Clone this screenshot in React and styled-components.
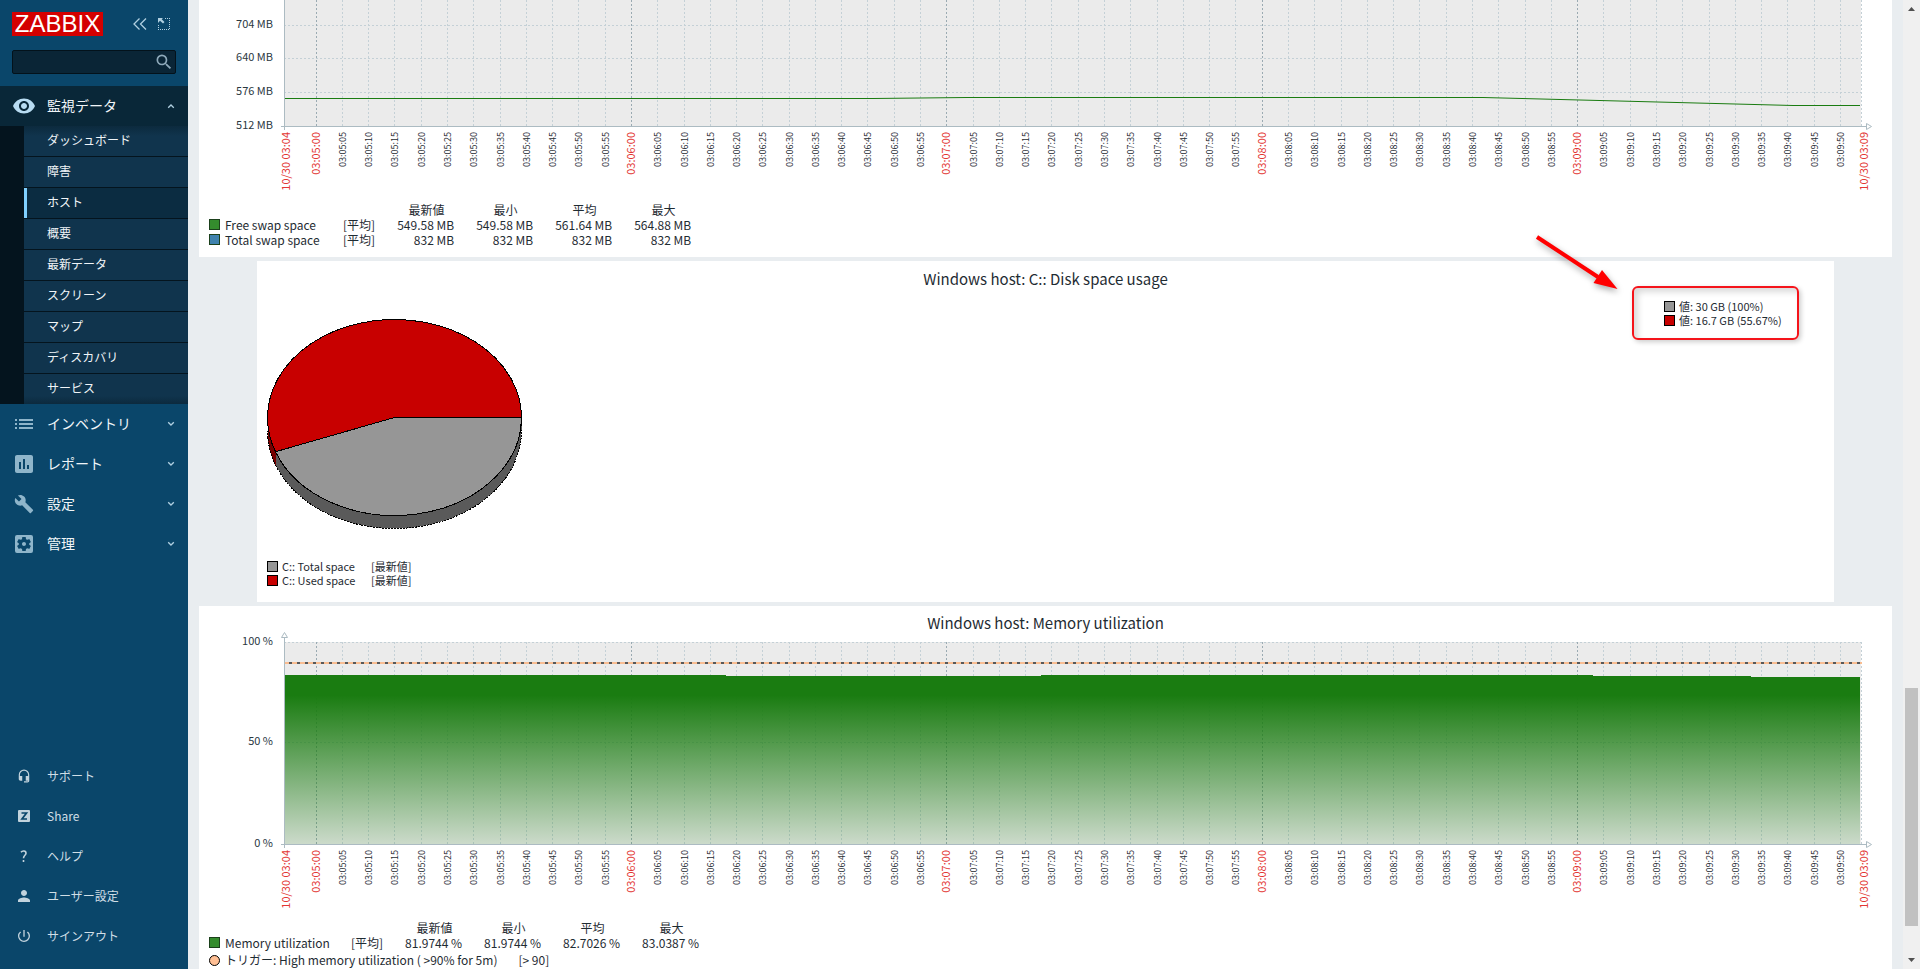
import { useState, useLayoutEffect, useRef } from "react";
import styled, { createGlobalStyle } from "styled-components";
import {
  MdVisibility,
  MdAssessment,
  MdBuild,
  MdSettingsApplications,
  MdHeadsetMic,
  MdPerson,
  MdPowerSettingsNew,
  MdSearch,
} from "react-icons/md";

const START = 3 * 3600 + 4 * 60 + 54;
const RANGE = 300;
const AXIS_LEFT = 85;
const AXIS_RIGHT = 31;

const subItems = [
  "ダッシュボード",
  "障害",
  "ホスト",
  "概要",
  "最新データ",
  "スクリーン",
  "マップ",
  "ディスカバリ",
  "サービス",
];

const mainItems = [
  { label: "インベントリ", icon: <ListIcon /> },
  { label: "レポート", icon: <MdAssessment size={24} /> },
  { label: "設定", icon: <MdBuild size={20} /> },
  { label: "管理", icon: <MdSettingsApplications size={24} /> },
];

const userItems = [
  { label: "サポート", icon: <MdHeadsetMic size={14} /> },
  { label: "Share", icon: <ShareIcon /> },
  { label: "ヘルプ", icon: <HelpIcon /> },
  { label: "ユーザー設定", icon: <MdPerson size={18} /> },
  { label: "サインアウト", icon: <MdPowerSettingsNew size={16} /> },
];

const swapLegend = {
  nameWidth: 134,
  rows: [
    { name: "Free swap space", color: "#348c2d", values: ["549.58 MB", "549.58 MB", "561.64 MB", "564.88 MB"] },
    { name: "Total swap space", color: "#3f82ae", values: ["832 MB", "832 MB", "832 MB", "832 MB"] },
  ],
};

const memoryLegend = {
  nameWidth: 142,
  rows: [
    { name: "Memory utilization", color: "#348c2d", values: ["81.9744 %", "81.9744 %", "82.7026 %", "83.0387 %"] },
  ],
};

function ListIcon() {
  return (
    <svg width="18" height="12" viewBox="0 0 18 12" fill="currentColor">
      <path d="M0 1h2v2H0zM4 1h14v2H4zM0 5h2v2H0zM4 5h14v2H4zM0 9h2v2H0zM4 9h14v2H4z" />
    </svg>
  );
}

function ShareIcon() {
  return (
    <svg width="12" height="12" viewBox="0 0 12 12">
      <rect width="12" height="12" rx="1" fill="currentColor" />
      <path d="M3.500 3h5L4 9h5" fill="none" stroke="#0a466a" strokeWidth="1.700" />
    </svg>
  );
}

function HelpIcon() {
  return (
    <svg width="8" height="12" viewBox="0 0 8 12" fill="none" stroke="currentColor" strokeWidth="1.600">
      <path d="M1 2.200C2.200.600 6 .300 6 3.200 6 5.400 3.500 5.200 3.500 8.200M3.500 10v2" />
    </svg>
  );
}

function Chevron({ up }) {
  return (
    <svg width="8" height="6" viewBox="0 0 8 6" fill="none" stroke="currentColor" strokeWidth="1.300">
      <path d={up ? "M1.200 4.800 4 2l2.800 2.800" : "M1.200 1.200 4 4l2.800-2.800"} />
    </svg>
  );
}

function clock(sec) {
  const pad = (n) => String(n).padStart(2, "0");
  return `${pad(Math.floor(sec / 3600))}:${pad(Math.floor(sec / 60) % 60)}:${pad(sec % 60)}`;
}

function useWidth() {
  const ref = useRef(null);
  const [width, setWidth] = useState(0);

  useLayoutEffect(() => {
    const update = () => setWidth(Math.floor(ref.current.getBoundingClientRect().width));
    update();
    const observer = new ResizeObserver(update);
    observer.observe(ref.current);
    return () => observer.disconnect();
  }, []);

  return [ref, width];
}

function TimeGraph({ top, bottom, height, ticks, arrow, label, children }) {
  const [ref, width] = useWidth();
  const right = width - AXIS_RIGHT;
  const x = (t) => Math.round(AXIS_LEFT + ((right - AXIS_LEFT) * t) / RANGE);

  const marks = [];
  for (let t = 6; t < RANGE - 3; t += 5) {
    marks.push({ t, major: (START + t) % 60 === 0 });
  }

  return (
    <Plot ref={ref} $height={height}>
      {width > 0 && (
        <svg width={width} height={height} role="img" aria-label={label}>
          <rect x={AXIS_LEFT} y={top} width={right - AXIS_LEFT} height={bottom - top} fill="#ebebeb" />
          {ticks.map((tick) => (
            <g key={tick.label}>
              {tick.y !== bottom && (
                <GridLine x1={AXIS_LEFT} x2={right} y1={tick.y + 0.5} y2={tick.y + 0.5} />
              )}
              <AxisText x={AXIS_LEFT - 11} y={tick.y + 3}>{tick.label}</AxisText>
            </g>
          ))}
          {marks.map(({ t, major }) => (
            <GridLine key={t} $major={major} x1={x(t) + 0.5} x2={x(t) + 0.5} y1={bottom} y2={top} />
          ))}
          <GridLine x1={right + 0.5} x2={right + 0.5} y1={bottom} y2={top} />

          {children(x, right)}

          <path
            d={`M${AXIS_LEFT - 3} ${bottom + 0.5}H${right + 5}M${AXIS_LEFT + 0.5} ${top - (arrow ? 5 : 0)}V${bottom + 4}`}
            stroke="#acbbc2"
          />
          <path
            d={`M${right + 5.5} ${bottom - 2.5}v6l5-3z`}
            fill="#fff"
            stroke="#acbbc2"
          />
          {arrow && (
            <path d={`M${AXIS_LEFT - 2.5} ${top - 4.5}h6l-3-5z`} fill="#fff" stroke="#acbbc2" />
          )}

          <TimeText $major transform={`translate(${AXIS_LEFT + 6} ${bottom + 6}) rotate(-90)`}>
            10/30 03:04
          </TimeText>
          {marks.map(({ t, major }) => (
            <TimeText
              key={t}
              $major={major}
              transform={`translate(${x(t) + 4} ${bottom + 6}) rotate(-90)`}
            >
              {clock(START + t)}
            </TimeText>
          ))}
          <TimeText $major transform={`translate(${right + 7} ${bottom + 6}) rotate(-90)`}>
            10/30 03:09
          </TimeText>
        </svg>
      )}
    </Plot>
  );
}

function SwapGraph() {
  const ticks = [
    { y: 25, label: "704 MB" },
    { y: 58, label: "640 MB" },
    { y: 92, label: "576 MB" },
    { y: 126, label: "512 MB" },
  ];
  const data = [[0, 98], [112, 98], [130, 97], [228, 97], [287, 105], [299.8, 105]];

  return (
    <TimeGraph top={0} bottom={126} height={202} ticks={ticks} label="Swap usage">
      {(x) => (
        <polyline
          points={data.map(([t, y]) => `${x(t)},${y + 0.5}`).join(" ")}
          fill="none"
          stroke="#1a7c11"
        />
      )}
    </TimeGraph>
  );
}

function MemoryGraph() {
  const ticks = [
    { y: 12, label: "100 %" },
    { y: 112, label: "50 %" },
    { y: 214, label: "0 %" },
  ];
  const steps = [[0, 45], [84, 46], [144, 45], [249, 46], [279, 47]];

  return (
    <TimeGraph top={12} bottom={214} height={290} ticks={ticks} arrow label="Memory utilization">
      {(x, right) => {
        let area = `M${x(0)} 214`;
        steps.forEach(([t, y]) => {
          area += `H${x(t)}V${y}`;
        });
        area += `H${right - 1}V214z`;
        return (
          <>
            <defs>
              <linearGradient id="memory" gradientUnits="userSpaceOnUse" x1="0" y1="45" x2="0" y2="214">
                <stop offset="0" stopColor="#1a7c11" />
                <stop offset="0.120" stopColor="#1a7c11" />
                <stop offset="1" stopColor="#1a7c11" stopOpacity="0.150" />
              </linearGradient>
            </defs>
            <path d={area} fill="url(#memory)" />
            <path d={`M${AXIS_LEFT} 33H${right + 1}`} stroke="#f9bd92" strokeWidth="2" />
            <path d={`M${AXIS_LEFT + 5} 33H${right + 1}`} stroke="#585858" strokeWidth="2" strokeDasharray="3 5" />
          </>
        );
      }}
    </TimeGraph>
  );
}

function DiskPie() {
  return (
    <svg width="256" height="212" viewBox="0 0 256 212" role="img" aria-label="Disk space usage">
      <g stroke="#000" strokeWidth="1" shapeRendering="crispEdges">
        <path d="M.500 98.500v13A127 98 0 0 0 8.500 145.740v-13z" fill="#780000" stroke="none" />
        <path d="M8.500 132.740v13A127 98 0 0 0 254.500 111.500v-13z" fill="#5a5a5a" stroke="none" />
        <path d="M.500 111.500A127 98 0 0 0 254.500 111.500" fill="none" strokeDasharray="2 1" />
        <path d="M127.500 98.500 8.500 132.740A127 98 0 1 1 254.500 98.500z" fill="#c80000" />
        <path d="M127.500 98.500H254.500A127 98 0 0 1 8.500 132.740z" fill="#969696" />
      </g>
    </svg>
  );
}

function Legend({ nameWidth, rows }) {
  return (
    <LegendTable>
      <thead>
        <tr>
          <NameHead $width={nameWidth} />
          <FnHead />
          <th>最新値</th>
          <th>最小</th>
          <th>平均</th>
          <th>最大</th>
        </tr>
      </thead>
      <tbody>
        {rows.map((row) => (
          <tr key={row.name}>
            <NameCell>
              <Key>
                <Swatch $color={row.color} $line="#1b401b" />
                {row.name}
              </Key>
            </NameCell>
            <NameCell>[平均]</NameCell>
            {row.values.map((value, i) => (
              <td key={i}>{value}</td>
            ))}
          </tr>
        ))}
      </tbody>
    </LegendTable>
  );
}

function Sidebar() {
  const [open, setOpen] = useState(true);

  return (
    <Aside>
      <Brand>
        <Logo href="#">ZABBIX</Logo>
        <Tools>
          <IconButton aria-label="Collapse">
            <svg width="14" height="12" viewBox="0 0 14 12" fill="none" stroke="currentColor" strokeWidth="1.300">
              <path d="M6.500.500 1 6l5.500 5.500M13 .500 7.500 6l5.500 5.500" />
            </svg>
          </IconButton>
          <IconButton aria-label="Hide">
            <svg width="12" height="12" viewBox="0 0 12 12" fill="none" stroke="currentColor">
              <path d="M7 .500h5M11.500 2v10M0 11.500h11M.500 7v4" strokeDasharray="1 1" />
              <path d="M0 0h5L3.700 1.300 6.500 4.100 5 5.600 2 2.800 0 5z" fill="currentColor" stroke="none" />
            </svg>
          </IconButton>
        </Tools>
      </Brand>

      <SearchBox>
        <SearchInput type="text" aria-label="検索" />
        <SearchButton aria-label="検索を実行">
          <MdSearch size={20} />
        </SearchButton>
      </SearchBox>

      <nav>
        <MenuButton $active onClick={() => setOpen(!open)}>
          <MenuIcon $bright><MdVisibility size={24} /></MenuIcon>
          <span>監視データ</span>
          <Chevron up={open} />
        </MenuButton>
        {open && (
          <SubMenu>
            {subItems.map((item) => (
              <li key={item}>
                <SubLink href="#" $selected={item === "ホスト"}>{item}</SubLink>
              </li>
            ))}
          </SubMenu>
        )}
        {mainItems.map((item) => (
          <MenuButton key={item.label}>
            <MenuIcon>{item.icon}</MenuIcon>
            <span>{item.label}</span>
            <Chevron />
          </MenuButton>
        ))}
      </nav>

      <UserMenu>
        {userItems.map((item) => (
          <UserLink href="#" key={item.label}>
            <UserIcon>{item.icon}</UserIcon>
            <span>{item.label}</span>
          </UserLink>
        ))}
      </UserMenu>
    </Aside>
  );
}

export default function App() {
  return (
    <Page>
      <GlobalStyle />
      <Sidebar />
      <Main>
        <Panel>
          <SwapGraph />
          <Legend {...swapLegend} />
        </Panel>

        <DiskPanel>
          <Title>Windows host: C:: Disk space usage</Title>
          <DiskBody>
            <DiskPie />
            <DiskValues>
              <SmallKey><Swatch $color="#969696" />値: 30 GB (100%)</SmallKey>
              <SmallKey><Swatch $color="#c80000" />値: 16.7 GB (55.67%)</SmallKey>
              <Callout />
              <Arrow width="100" height="70" viewBox="0 0 100 70" aria-hidden="true">
                <path d="M9 13 70 53" stroke="#f00" strokeWidth="4" />
                <path d="M74 46 89.500 65 65.500 59z" fill="#f00" />
              </Arrow>
            </DiskValues>
          </DiskBody>
          <DiskLegend>
            <SmallKey><Swatch $color="#969696" /><DiskName>C:: Total space</DiskName>[最新値]</SmallKey>
            <SmallKey><Swatch $color="#c80000" /><DiskName>C:: Used space</DiskName>[最新値]</SmallKey>
          </DiskLegend>
        </DiskPanel>

        <Panel>
          <Title $flush>Windows host: Memory utilization</Title>
          <MemoryGraph />
          <Legend {...memoryLegend} />
          <TriggerRow>
            <Dot />
            <span>トリガー: High memory utilization ( &gt;90% for 5m)</span>
            <span>[&gt; 90]</span>
          </TriggerRow>
        </Panel>
      </Main>

      <ScrollTrack>
        <svg width="7" height="4" viewBox="0 0 7 4"><path d="M0 4 3.500 0 7 4z" fill="#505050" /></svg>
        <ScrollRail>
          <ScrollThumb />
        </ScrollRail>
        <svg width="7" height="4" viewBox="0 0 7 4"><path d="M0 0 3.500 4 7 0z" fill="#505050" /></svg>
      </ScrollTrack>
    </Page>
  );
}

const GlobalStyle = createGlobalStyle`
  * {
    box-sizing: border-box;
  }
  body {
    margin: 0;
    font-family: "Noto Sans CJK JP", sans-serif;
    color: #1f2c33;
  }
  button {
    font-family: inherit;
  }
`

const Page = styled.div`
  display: flex;
  height: 100vh;
  overflow: hidden;
  background: #e9edf0;
`

const Aside = styled.aside`
  display: flex;
  flex-direction: column;
  flex: 0 0 188px;
  min-width: 0;
  background: #0a466a;
`

const Brand = styled.div`
  display: flex;
  align-items: center;
  justify-content: space-between;
  padding: 12px 18px 0 12px;
`

const Logo = styled.a`
  width: 91px;
  height: 24px;
  background: #d40000;
  color: #fff;
  font: 24px/24px "Liberation Sans", Arial, sans-serif;
  text-align: center;
  text-decoration: none;
`

const Tools = styled.div`
  display: flex;
  gap: 11px;
`

const IconButton = styled.button`
  display: flex;
  align-items: center;
  padding: 0;
  border: 0;
  background: none;
  color: #b0cfe0;
  cursor: pointer;
`

const SearchBox = styled.div`
  display: flex;
  height: 24px;
  margin: 14px 12px 12px;
  padding-right: 1px;
  border: 1px solid #03121b;
  border-radius: 2px;
  background: #0a2536;
`

const SearchButton = styled(IconButton)`
  color: #8ea9ba;
`

const SearchInput = styled.input`
  flex: 1;
  min-width: 0;
  padding: 0 6px;
  border: 0;
  outline: none;
  background: none;
  color: #fff;
  font-size: 12px;
`

const MenuButton = styled.button`
  display: flex;
  align-items: center;
  width: 100%;
  height: 40px;
  padding: 0 13px 0 12px;
  border: 0;
  background: ${(p) => (p.$active ? "#092738" : "none")};
  color: #f0f5f8;
  font-size: 14px;
  text-align: left;
  cursor: pointer;
  span {
    flex: 1;
    padding-bottom: 2px;
  }
  > svg {
    color: #b0cfe0;
  }
`

const MenuIcon = styled.i`
  display: flex;
  justify-content: center;
  width: 24px;
  margin-right: 11px;
  color: ${(p) => (p.$bright ? "#b8dcf2" : "#8fb5ca")};
`

const SubMenu = styled.ul`
  margin: 0;
  padding: 0 0 0 24px;
  list-style: none;
  background: #04141e;
  li + li {
    border-top: 1px solid #04141e;
  }
  li:first-child a {
    background: linear-gradient(#0c2a3e, #10344d 10px);
  }
  li:last-child a {
    background: linear-gradient(#10344d 22px, #0c2a3e);
  }
`

const SubLink = styled.a`
  display: block;
  height: 30px;
  padding-left: ${(p) => (p.$selected ? "20px" : "23px")};
  border-left: ${(p) => (p.$selected ? "3px solid #80d0ff" : "0")};
  background: ${(p) => (p.$selected ? "#0b2c41" : "#10344d")};
  color: #f0f5f8;
  font-size: 12px;
  line-height: 28px;
  text-decoration: none;
`

const UserMenu = styled.nav`
  margin-top: auto;
  padding-bottom: 13px;
`

const UserLink = styled.a`
  display: flex;
  align-items: center;
  height: 40px;
  padding-left: 12px;
  color: #d0dee6;
  font-size: 12px;
  text-decoration: none;
  span {
    padding-bottom: 2px;
  }
`

const UserIcon = styled(MenuIcon)`
  color: #c2d3dd;
`

const Main = styled.main`
  display: flex;
  flex-direction: column;
  gap: 4px;
  flex: 1;
  min-width: 0;
  padding: 0 11px;
  overflow: hidden;
`

const Panel = styled.section`
  flex: none;
  padding-bottom: 10px;
  background: #fff;
`

const DiskPanel = styled(Panel)`
  margin: 0 58px;
`

const Title = styled.h2`
  margin: 0;
  padding-top: ${(p) => (p.$flush ? "6px" : "7px")};
  height: ${(p) => (p.$flush ? "24px" : "38px")};
  font-size: 15px;
  font-weight: 400;
  line-height: 22px;
  text-align: center;
`

const Plot = styled.div`
  height: ${(p) => p.$height}px;
  svg {
    display: block;
  }
`

const GridLine = styled.line`
  stroke: ${(p) => (p.$major ? "#9aaab2" : "#c4d0d6")};
  stroke-dasharray: 2 2;
`

const AxisText = styled.text`
  fill: #2b383f;
  font-size: 11px;
  text-anchor: end;
`

const TimeText = styled.text`
  fill: ${(p) => (p.$major ? "#e33734" : "#1f2c33")};
  font-size: ${(p) => (p.$major ? "11px" : "9px")};
  text-anchor: end;
`

const LegendTable = styled.table`
  margin-left: 10px;
  border-collapse: collapse;
  table-layout: fixed;
  font-size: 12px;
  line-height: 15px;
  th {
    width: 79px;
    padding: 0 0 0 24px;
    font-weight: 400;
  }
  td {
    padding: 0;
    text-align: right;
    white-space: nowrap;
  }
`

const NameHead = styled.td`
  width: ${(p) => p.$width}px;
`

const FnHead = styled.td`
  width: 31px;
`

const NameCell = styled.td`
  && {
    text-align: left;
  }
`

const Key = styled.div`
  display: flex;
  align-items: center;
  gap: 5px;
`

const SmallKey = styled(Key)`
  gap: 4px;
  font-size: 11px;
  line-height: 14px;
`

const Swatch = styled.i`
  flex: none;
  width: 11px;
  height: 11px;
  border: 1px solid ${(p) => p.$line || "#000"};
  background: ${(p) => p.$color};
`

const DiskBody = styled.div`
  display: flex;
  justify-content: space-between;
  padding: 0 10px;
  > svg {
    margin-top: 20px;
  }
`

const DiskValues = styled.div`
  position: relative;
  flex: 0 0 160px;
`

const DiskLegend = styled.div`
  padding: 28px 10px 5px;
`

const DiskName = styled.span`
  width: 85px;
`

const Callout = styled.div`
  position: absolute;
  top: -13px;
  left: -32px;
  width: 167px;
  height: 54px;
  border: 2px solid #f5141b;
  border-radius: 6px;
  box-shadow: 2px 2px 5px rgba(0, 0, 0, 0.2), inset 4px 4px 6px rgba(0, 0, 0, 0.15);
`

const Arrow = styled.svg`
  position: absolute;
  top: -75px;
  left: -136px;
  filter: drop-shadow(1px 3px 3px rgba(0, 0, 0, 0.35));
`

const TriggerRow = styled(Key)`
  margin: 2px 0 0 10px;
  font-size: 12px;
  line-height: 16px;
  span + span {
    margin-left: 16px;
  }
`

const Dot = styled.i`
  width: 11px;
  height: 11px;
  border: 1px solid #000;
  border-radius: 50%;
  background: #ffbf94;
`

const ScrollTrack = styled.div`
  display: flex;
  flex-direction: column;
  align-items: center;
  flex: 0 0 17px;
  padding: 7px 0;
  background: #f0f0f0;
`

const ScrollRail = styled.div`
  display: flex;
  flex-direction: column;
  justify-content: flex-end;
  flex: 1;
  width: 13px;
  padding-bottom: 32px;
`

const ScrollThumb = styled.div`
  height: 26%;
  background: #c1c1c1;
`
